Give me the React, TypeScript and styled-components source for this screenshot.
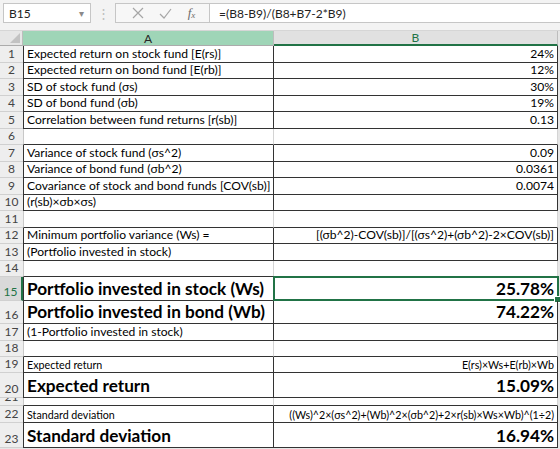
import styled, { createGlobalStyle } from 'styled-components';

type Size = 'normal' | 'small' | 'big';

interface RowData {
  n: number;
  a?: string;
  b?: string;
  h: number;
  border?: boolean;
  size?: Size;
  bSize?: Size;
  selected?: boolean;
}

const rows: RowData[] = [
  { n: 1, a: 'Expected return on stock fund [E(rs)]', b: '24%', h: 16.5, border: true },
  { n: 2, a: 'Expected return on bond fund [E(rb)]', b: '12%', h: 16.5, border: true },
  { n: 3, a: 'SD of stock fund (σs)', b: '30%', h: 16.5, border: true },
  { n: 4, a: 'SD of bond fund (σb)', b: '19%', h: 16.5, border: true },
  { n: 5, a: 'Correlation between fund returns [r(sb)]', b: '0.13', h: 16.5, border: true },
  { n: 6, h: 16.5 },
  { n: 7, a: 'Variance of stock fund (σs^2)', b: '0.09', h: 16.5, border: true },
  { n: 8, a: 'Variance of bond fund (σb^2)', b: '0.0361', h: 16.5, border: true },
  { n: 9, a: 'Covariance of stock and bond funds [COV(sb)]', b: '0.0074', h: 16.5, border: true },
  { n: 10, a: '(r(sb)×σb×σs)', h: 16.5, border: true },
  { n: 11, h: 16.5 },
  { n: 12, a: 'Minimum portfolio variance (Ws) =', b: '[(σb^2)-COV(sb)]/[(σs^2)+(σb^2)-2×COV(sb)]', h: 16.5, border: true },
  { n: 13, a: '(Portfolio invested in stock)', h: 16.5, border: true },
  { n: 14, h: 16.5 },
  { n: 15, a: 'Portfolio invested in stock (Ws)', b: '25.78%', h: 24, border: true, size: 'big', bSize: 'big', selected: true },
  { n: 16, a: 'Portfolio invested in bond (Wb)', b: '74.22%', h: 23, border: true, size: 'big', bSize: 'big' },
  { n: 17, a: '(1-Portfolio invested in stock)', h: 17, border: true },
  { n: 18, h: 16 },
  { n: 19, a: 'Expected return', b: 'E(rs)×Ws+E(rb)×Wb', h: 16, border: true, size: 'small', bSize: 'small' },
  { n: 20, a: 'Expected return', b: '15.09%', h: 25, border: true, size: 'big', bSize: 'big' },
  { n: 21, h: 8 },
  { n: 22, a: 'Standard deviation', b: '((Ws)^2×(σs^2)+(Wb)^2×(σb^2)+2×r(sb)×Ws×Wb)^(1÷2)', h: 17, border: true, size: 'small', bSize: 'small' },
  { n: 23, a: 'Standard deviation', b: '16.94%', h: 25, border: true, size: 'big', bSize: 'big' },
];

const GREEN = '#217346';
const GRID = '#d4d4d4';
const FONT = 'Lato, "Liberation Sans", sans-serif';

const GlobalStyle = createGlobalStyle`
  body {
    margin: 0;
    background: #e6e6e6;
    font-family: ${FONT};
  }
`;

const fontFor = (size: Size = 'normal') => {
  if (size === 'big') return 'font-size: 17.2px; font-weight: 700;';
  if (size === 'small') return 'font-size: 10.7px;';
  return 'font-size: 12.1px;';
};

function App() {
  return (
    <>
      <GlobalStyle />
      <Page>
        <Toolbar>
          <NameBox>
            <span>B15</span>
            <Caret>▾</Caret>
          </NameBox>
          <Dots>⋮</Dots>
          <FormulaArea>
            <Buttons>
              <svg width="12" height="12" viewBox="0 0 12 12">
                <path d="M1 1 L11 11 M11 1 L1 11" stroke="#a6a6a6" strokeWidth="1.2" fill="none" />
              </svg>
              <svg width="13" height="11" viewBox="0 0 13 11">
                <path d="M1 6 L5 10 L12 1" stroke="#a6a6a6" strokeWidth="1.2" fill="none" />
              </svg>
              <Fx>
                f<sub>x</sub>
              </Fx>
            </Buttons>
            <FormulaText>=(B8-B9)/(B8+B7-2*B9)</FormulaText>
          </FormulaArea>
        </Toolbar>

        <Sheet>
          <HeaderRow>
            <Corner>
              <svg width="10" height="10" viewBox="0 0 10 10">
                <path d="M10 0 L10 10 L0 10 Z" fill="#c2c2c2" />
              </svg>
            </Corner>
            <ColHead $active>A</ColHead>
            <ColHead $current>B</ColHead>
          </HeaderRow>

          {rows.map((row, i) => {
            const next = rows[i + 1];
            const darkBottom = !!row.border || !!(next && next.border);
            return (
              <Row key={row.n} style={{ height: row.h }}>
                <RowHead $selected={row.selected}>{row.n}</RowHead>
                <CellA $border={row.border} $dark={darkBottom} $size={row.size}>
                  {row.a}
                </CellA>
                <CellB $border={row.border} $dark={darkBottom} $size={row.bSize}>
                  {row.b}
                  {row.selected && <Selection><Handle /></Selection>}
                </CellB>
              </Row>
            );
          })}
        </Sheet>
      </Page>
    </>
  );
}

export default App;

const Page = styled.div`
  width: 560px;
  height: 449px;
  overflow: hidden;
  background: #e6e6e6;
`;

const Toolbar = styled.div`
  height: 31px;
  box-sizing: border-box;
  padding: 3px 0 7px 3px;
  display: flex;
  align-items: stretch;
  background: #f3f3f3;
  border-bottom: 1px solid #d6d6d6;
`;

const NameBox = styled.div`
  width: 88px;
  box-sizing: border-box;
  background: #fff;
  border: 1px solid #c6c6c6;
  display: flex;
  align-items: center;
  justify-content: space-between;
  padding: 0 6px 0 5px;
  font-size: 12px;
  color: #222;
`;

const Caret = styled.span`
  font-size: 10px;
  color: #8a8a8a;
`;

const Dots = styled.div`
  width: 24px;
  display: flex;
  align-items: center;
  justify-content: center;
  color: #bdbdbd;
  font-size: 13px;
`;

const FormulaArea = styled.div`
  flex: 1;
  display: flex;
  background: #fff;
  border: 1px solid #c6c6c6;
  border-right: none;
`;

const Buttons = styled.div`
  width: 94px;
  display: flex;
  align-items: center;
  justify-content: space-around;
  padding: 0 6px 0 8px;
  box-sizing: border-box;
  border-right: 1px solid #c6c6c6;
  background: #f7f7f7;
`;

const Fx = styled.span`
  font-family: "Liberation Serif", serif;
  font-style: italic;
  font-size: 13px;
  color: #6b6b6b;

  sub {
    font-size: 9px;
    vertical-align: -1px;
  }
`;

const FormulaText = styled.div`
  display: flex;
  align-items: center;
  padding-left: 9px;
  font-size: 12px;
  color: #222;
`;

const Sheet = styled.div`
  width: 558px;
  background: #fff;
`;

const HeaderRow = styled.div`
  display: flex;
  height: 15px;
  background: #e6e6e6;
`;

const Corner = styled.div`
  width: 23px;
  box-sizing: border-box;
  border-right: 1px solid #bdbdbd;
  border-bottom: 1px solid #ababab;
  display: flex;
  align-items: flex-end;
  justify-content: flex-end;
  padding: 0 2px 2px 0;
`;

const ColHead = styled.div<{ $active?: boolean; $current?: boolean }>`
  box-sizing: border-box;
  width: ${({ $active }) => ($active ? '251px' : '284px')};
  background: ${({ $active }) => ($active ? '#9fd5b7' : '#e1e1e1')};
  color: ${({ $current }) => ($current ? GREEN : '#262626')};
  border-right: 1px solid #bdbdbd;
  border-bottom: ${({ $current }) => ($current ? `2px solid ${GREEN}` : '1px solid #ababab')};
  font-size: 12px;
  display: flex;
  align-items: center;
  justify-content: center;
`;

const Row = styled.div`
  display: flex;
`;

const RowHead = styled.div<{ $selected?: boolean }>`
  width: 23px;
  flex-shrink: 0;
  box-sizing: border-box;
  overflow: hidden;
  background: ${({ $selected }) => ($selected ? '#d9d9d9' : '#eeeeee')};
  color: ${({ $selected }) => ($selected ? GREEN : '#444')};
  border-bottom: 1px solid #d0d0d0;
  border-right: ${({ $selected }) => ($selected ? `2px solid ${GREEN}` : '0')};
  font-size: 12px;
  line-height: 14px;
  display: flex;
  align-items: flex-end;
  justify-content: center;
  padding-bottom: 1px;
`;

const Cell = styled.div<{ $border?: boolean; $dark?: boolean; $size?: Size }>`
  position: relative;
  box-sizing: border-box;
  flex-shrink: 0;
  white-space: nowrap;
  color: #000;
  ${({ $size }) => fontFor($size)}
  line-height: 1.15;
  display: flex;
  align-items: flex-end;
  padding: 0 3px 1px 3px;
  border-bottom: 1px solid ${({ $dark }) => ($dark ? '#333' : GRID)};
  border-right: 1px solid ${({ $border }) => ($border ? '#333' : GRID)};
`;

const CellA = styled(Cell)`
  width: 251px;
  border-left: 1px solid ${({ $border }) => ($border ? '#333' : '#c8c8c8')};
  overflow: hidden;
`;

const CellB = styled(Cell)`
  width: 284px;
  justify-content: flex-end;
`;

const Selection = styled.div`
  position: absolute;
  inset: -1px -2px -1px -1px;
  border: 2px solid ${GREEN};
  pointer-events: none;
`;

const Handle = styled.div`
  position: absolute;
  right: -4px;
  bottom: -4px;
  width: 5px;
  height: 5px;
  background: ${GREEN};
  border: 1px solid #fff;
`;
